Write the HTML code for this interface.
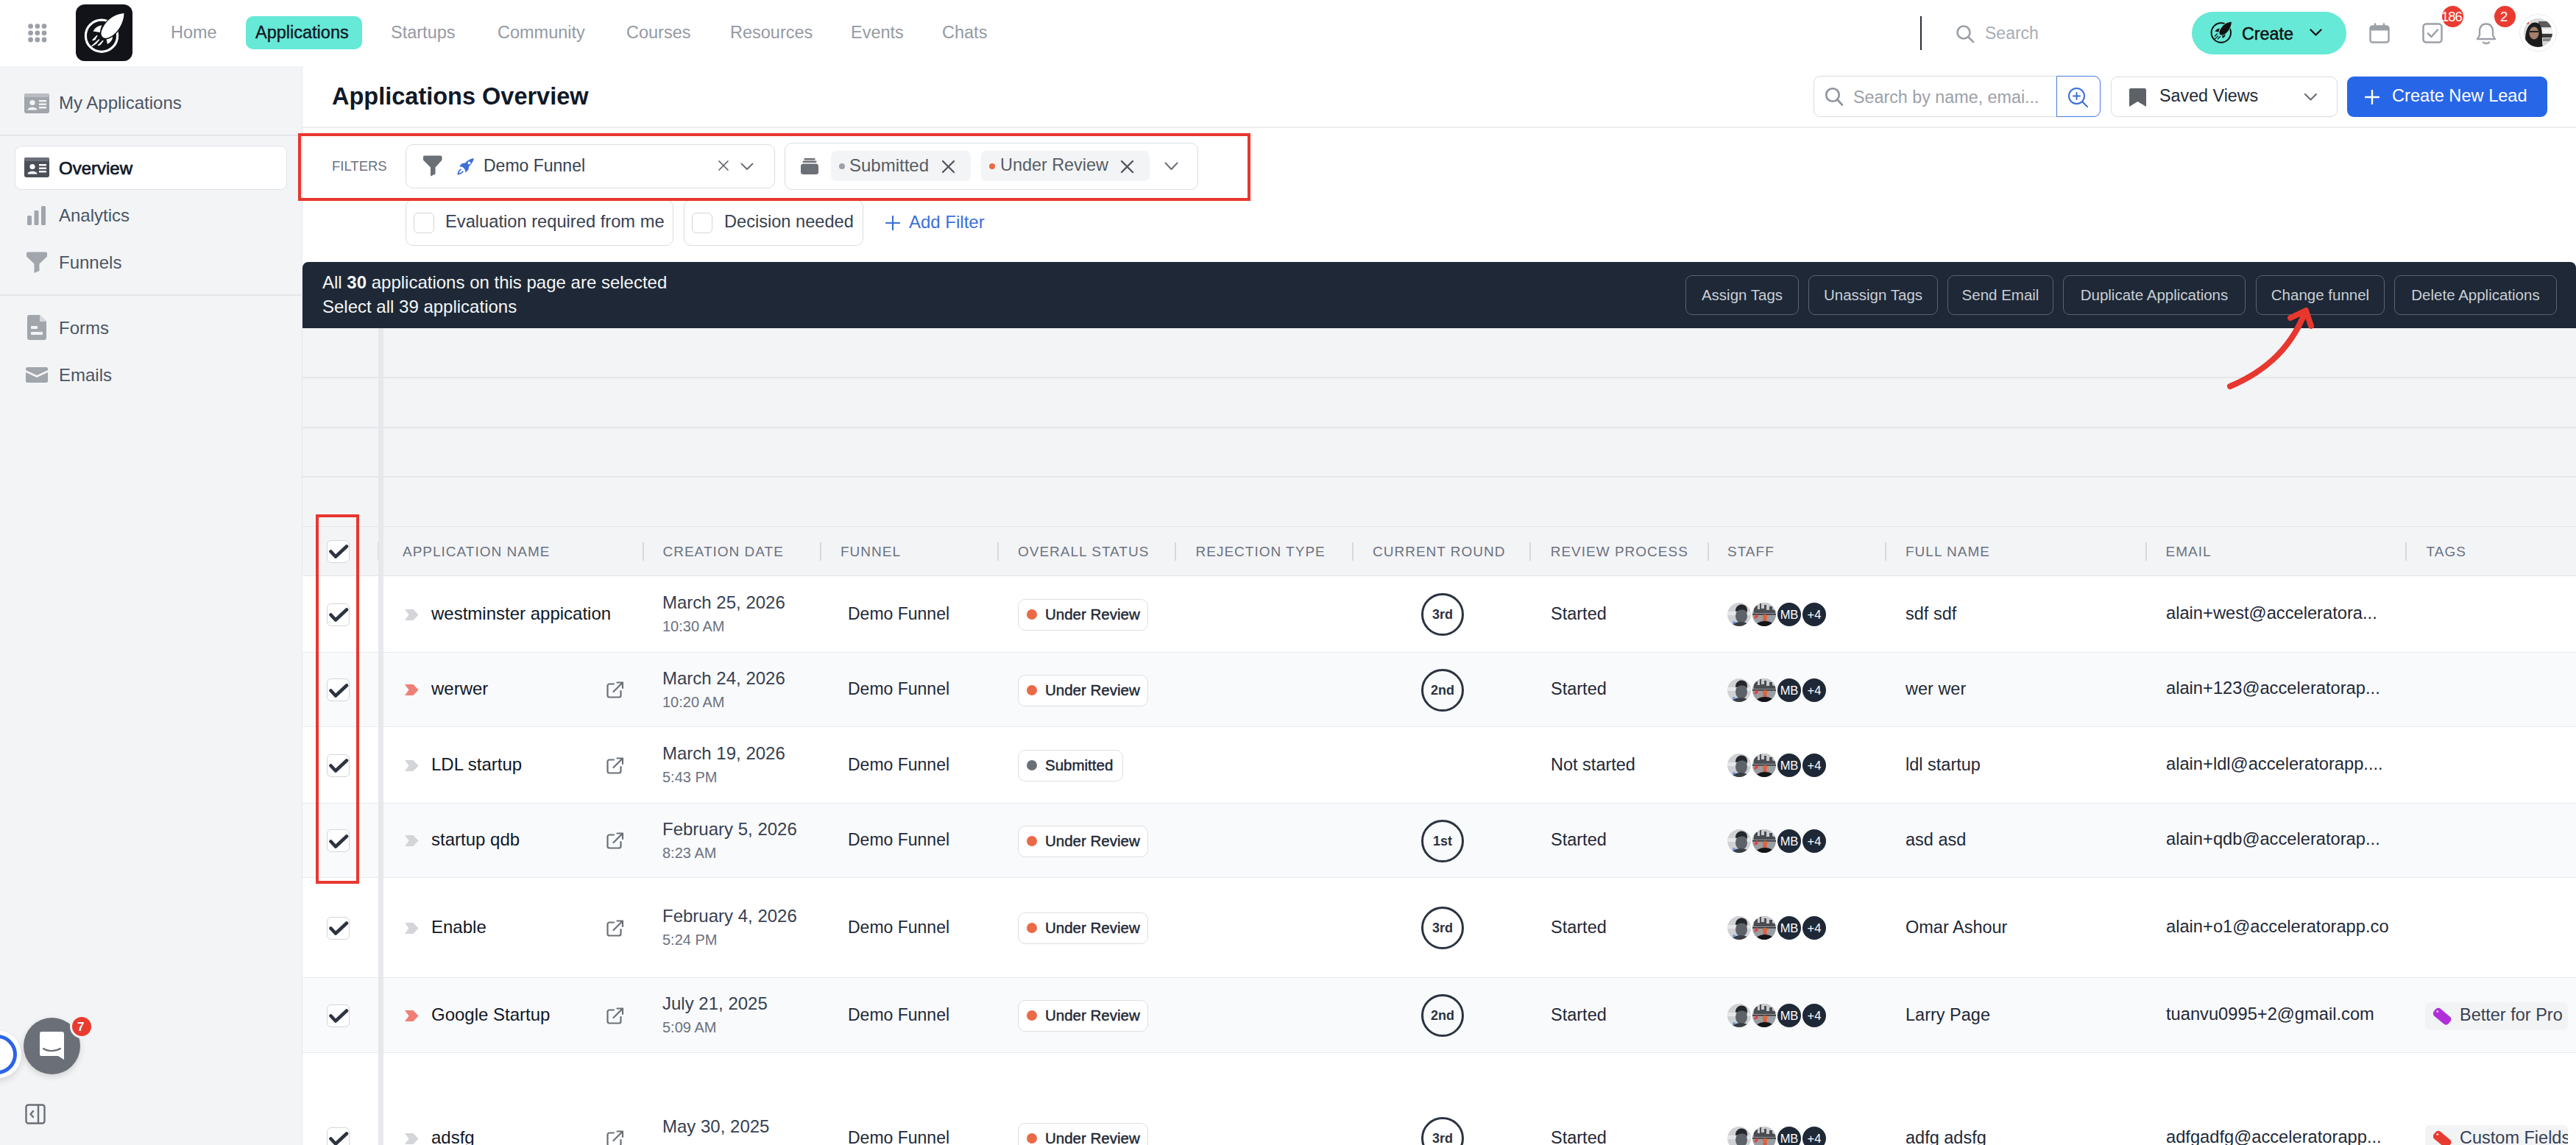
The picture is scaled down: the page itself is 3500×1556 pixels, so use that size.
<!DOCTYPE html>
<html><head><meta charset="utf-8">
<style>
*{box-sizing:border-box;margin:0;padding:0}
html,body{width:3500px;height:1556px;overflow:hidden;background:#fff;font-family:"Liberation Sans",sans-serif;color:#111827}
.a{position:absolute}
.t{position:absolute;white-space:nowrap;line-height:1}
svg{display:block}
/* nav */
.nav{font-size:23.5px;color:#959aa3}
/* sidebar */
#side{position:absolute;left:0;top:90px;width:411px;height:1466px;background:#f3f4f6;border-right:1px solid #e5e7eb}
.si{position:absolute;left:80px;font-size:24px;color:#4b5563;line-height:1}
.hdr{font-size:19px;letter-spacing:1px;color:#6b7280}
.sep{position:absolute;width:2px;height:25px;top:737px;background:#d6d9de}
.row{position:absolute;left:411px;width:3089px}
.cb{position:absolute;width:31px;height:31px;border:1.5px solid #d1d5db;border-radius:6px;background:#fff}
.pill{position:absolute;height:43px;border:1.5px solid #dcdfe4;border-radius:10px;background:#fff;font-size:20.5px;color:#1f2937;-webkit-text-stroke:0.45px #1f2937}
.dot{position:absolute;width:14px;height:14px;border-radius:50%;left:11px;top:13px;background:#ea6a47}
.rc{position:absolute;width:58px;height:58px;border:3px solid #2b3340;border-radius:50%;font-size:18px;font-weight:700;color:#2b3340;text-align:center;line-height:52px}
.av{position:absolute;width:33px;height:33px;border-radius:50%}
.btn{position:absolute;top:374px;height:54px;border:1.5px solid #5b6370;border-radius:9px;color:#c9ced6;font-size:20.5px;line-height:51px;text-align:center}
</style></head><body>

<!-- ============ TOP NAV ============ -->
<div class="a" style="left:0;top:0;width:3500px;height:90px;background:#fff"></div>
<svg class="a" style="left:38px;top:32px" width="27" height="27" viewBox="0 0 27 27">
 <g fill="#9ca0a8"><circle cx="3.6" cy="3.6" r="3.4"/><circle cx="12.8" cy="3.6" r="3.4"/><circle cx="22" cy="3.6" r="3.4"/>
 <circle cx="3.6" cy="12.8" r="3.4"/><circle cx="12.8" cy="12.8" r="3.4"/><circle cx="22" cy="12.8" r="3.4"/>
 <circle cx="3.6" cy="22" r="3.4"/><circle cx="12.8" cy="22" r="3.4"/><circle cx="22" cy="22" r="3.4"/></g></svg>
<div class="a" style="left:103px;top:6px;width:77px;height:77px;border-radius:12px;background:#111318"></div>
<svg class="a" style="left:103px;top:6px" width="77" height="77" viewBox="0 0 77 77">
 <circle cx="35" cy="42.7" r="21.6" fill="none" stroke="#fff" stroke-width="3.2"/>
 <path d="M65.5 12 C57 12.5 47 17.5 41.5 24.5 C37 30 34.5 35.5 34.5 40 C35 44.5 38.5 46.5 43 45.5 C49 44 55.5 38 59.5 31.5 C63.5 25 65.5 18 65.5 12 Z" fill="#fff" stroke="#111318" stroke-width="2.6" paint-order="stroke"/>
 <path d="M23.5 36.5 C26 32 30 29 35.5 28.5 C34 31.5 33 34.5 33 38 Z" fill="#fff"/>
 <path d="M41.5 47.5 C44.5 47 47.5 45.5 50 44 C50 48 47.5 51.5 43 54 Z" fill="#fff"/>
 <path d="M23 48.5 L28.8 42.5 L26 47.5Z M22 56.5 L31.5 48 L27 53.5Z M30.5 55.5 L36.8 49.5 L33.5 54Z" fill="#fff" stroke="#fff" stroke-width="1.4" stroke-linejoin="round"/>
 <path d="M36.5 41 C38 35 41 29 46 24" fill="none" stroke="#111318" stroke-width="0"/>
</svg>
<div class="t nav" style="left:232px;top:33px">Home</div>
<div class="a" style="left:334px;top:22px;width:158px;height:45px;border-radius:10px;background:#66e9d6"></div>
<div class="t nav" style="left:347px;top:33px;color:#111827;-webkit-text-stroke:0.4px #111827">Applications</div>
<div class="t nav" style="left:531px;top:33px">Startups</div>
<div class="t nav" style="left:676px;top:33px">Community</div>
<div class="t nav" style="left:851px;top:33px">Courses</div>
<div class="t nav" style="left:992px;top:33px">Resources</div>
<div class="t nav" style="left:1156px;top:33px">Events</div>
<div class="t nav" style="left:1280px;top:33px">Chats</div>

<div class="a" style="left:2609px;top:22px;width:2px;height:46px;background:#2b2f36"></div>
<svg class="a" style="left:2657px;top:33px" width="27" height="27" viewBox="0 0 27 27"><circle cx="11" cy="11" r="8.5" fill="none" stroke="#9ca0a8" stroke-width="2.6"/><path d="M17.5 17.5 L24 24" stroke="#9ca0a8" stroke-width="2.6" stroke-linecap="round"/></svg>
<div class="t nav" style="left:2697px;top:34px;font-size:23px;color:#a9adb4">Search</div>

<div class="a" style="left:2978px;top:16px;width:210px;height:58px;border-radius:29px;background:#66e9d6"></div>
<svg class="a" style="left:3002px;top:28px" width="34" height="34" viewBox="0 0 34 34">
 <circle cx="15.8" cy="16.5" r="13.2" fill="none" stroke="#111" stroke-width="2"/>
 <g transform="translate(-4.9 -4.56) scale(0.53)">
 <path d="M65.5 12 C57 12.5 47 17.5 41.5 24.5 C37 30 34.5 35.5 34.5 40 C35 44.5 38.5 46.5 43 45.5 C49 44 55.5 38 59.5 31.5 C63.5 25 65.5 18 65.5 12 Z" fill="#111" stroke="#66e9d6" stroke-width="3.5" paint-order="stroke"/>
 <path d="M23.5 36.5 C26 32 30 29 35.5 28.5 C34 31.5 33 34.5 33 38 Z" fill="#111"/>
 <path d="M41.5 47.5 C44.5 47 47.5 45.5 50 44 C50 48 47.5 51.5 43 54 Z" fill="#111"/>
 <path d="M23 48.5 L28.8 42.5 M22 56.5 L31.5 48 M30.5 55.5 L36.8 49.5" stroke="#111" stroke-width="2.4" stroke-linecap="round"/>
 </g>
</svg>
<div class="t" style="left:3046px;top:35px;font-size:23.3px;color:#111;-webkit-text-stroke:0.5px #111">Create</div>
<svg class="a" style="left:3137px;top:38px" width="19" height="13" viewBox="0 0 19 13"><path d="M2.5 2.5 L9.5 9.5 L16.5 2.5" fill="none" stroke="#111" stroke-width="2.3" stroke-linecap="round" stroke-linejoin="round"/></svg>

<svg class="a" style="left:3219px;top:31px" width="28" height="28" viewBox="0 0 28 28"><rect x="1.5" y="4.5" width="25" height="22" rx="3" fill="none" stroke="#9ca0a8" stroke-width="2.4"/><rect x="1.5" y="4.5" width="25" height="6" rx="2" fill="#9ca0a8"/><path d="M8 1.5 V6 M20 1.5 V6" stroke="#9ca0a8" stroke-width="2.4" stroke-linecap="round"/></svg>
<svg class="a" style="left:3291px;top:31px" width="29" height="29" viewBox="0 0 29 29"><rect x="1.5" y="1.5" width="25" height="25" rx="4" fill="none" stroke="#9ca0a8" stroke-width="2.5"/><path d="M8 14.5 L12.5 19 L21 9.5" fill="none" stroke="#9ca0a8" stroke-width="2.5" stroke-linecap="round" stroke-linejoin="round"/></svg>
<div class="a" style="left:3318px;top:8px;width:29px;height:29px;border-radius:50%;background:#ea3b30;overflow:hidden"><div class="t" style="left:-1px;top:6px;font-size:18.5px;color:#fff;letter-spacing:-1px">186</div></div>
<svg class="a" style="left:3363px;top:30px" width="30" height="31" viewBox="0 0 30 31"><path d="M15 2.5 C9 2.5 6 7 6 12 V18 L3 23 H27 L24 18 V12 C24 7 21 2.5 15 2.5Z" fill="none" stroke="#9ca0a8" stroke-width="2.4" stroke-linejoin="round"/><path d="M11 27.5 C12.5 29.5 17.5 29.5 19 27.5" fill="none" stroke="#9ca0a8" stroke-width="2.4" stroke-linecap="round"/></svg>
<div class="a" style="left:3389px;top:8px;width:29px;height:29px;border-radius:50%;background:#ea3b30"><div class="t" style="left:8px;top:6px;font-size:18.5px;color:#fff">2</div></div>
<div class="a" style="left:3423px;top:19px;width:51px;height:51px;border-radius:50%;background:#fff;border:1.5px solid #e8eaee"></div>
<svg class="a" style="left:3429px;top:25px" width="39" height="39" viewBox="0 0 39 39"><defs><clipPath id="avc"><circle cx="19.5" cy="19.5" r="19.5"/></clipPath></defs><g clip-path="url(#avc)"><rect width="39" height="39" fill="#d9d9d9"/><rect x="20" y="4" width="19" height="8" fill="#5a5a5a"/><rect x="24" y="14" width="15" height="6" fill="#f2f2f2"/><rect x="22" y="21" width="17" height="5" fill="#3a3a3a"/><rect x="26" y="27" width="13" height="4" fill="#888"/><path d="M3 39 C1 28 2 14 9 8 C15 3 23 6 24 14 C26 22 24 32 26 39Z" fill="#1c1c1c"/><ellipse cx="14" cy="20" rx="6.5" ry="8.5" fill="#a57e6c"/><path d="M8 18 H20" stroke="#222" stroke-width="2"/><circle cx="5" cy="6" r="2" fill="#d03a3a"/></g></svg>

<!-- ============ SIDEBAR ============ -->
<div id="side"></div>
<div class="a" style="left:0;top:183px;width:410px;height:2px;background:#e3e5e9"></div>
<div class="a" style="left:0;top:400px;width:410px;height:2px;background:#e3e5e9"></div>
<div class="a" style="left:20px;top:198px;width:370px;height:60px;border-radius:9px;background:#fff;border:1.5px solid #dfe2e6"></div>
<svg class="a" style="left:33px;top:127px" width="34" height="27" viewBox="0 0 34 27"><rect x="0" y="0" width="34" height="27" rx="3" fill="#a1a5ac"/><rect x="0" y="0" width="34" height="5" rx="2" fill="#b9bcc2"/><circle cx="11" cy="12.5" r="3.6" fill="#f3f4f6"/><path d="M4.5 22.5 C5 17.5 17 17.5 17.5 22.5Z" fill="#f3f4f6"/><rect x="20" y="9" width="10" height="2.4" fill="#f3f4f6"/><rect x="20" y="13.5" width="10" height="2.4" fill="#f3f4f6"/><rect x="20" y="18" width="10" height="2.4" fill="#f3f4f6"/></svg>
<div class="si" style="top:128px">My Applications</div>
<svg class="a" style="left:33px;top:214px" width="34" height="27" viewBox="0 0 34 27"><rect x="0" y="0" width="34" height="27" rx="3" fill="#4b5058"/><rect x="0" y="0" width="34" height="5" rx="2" fill="#6b7078"/><circle cx="11" cy="12.5" r="3.6" fill="#fff"/><path d="M4.5 22.5 C5 17.5 17 17.5 17.5 22.5Z" fill="#fff"/><rect x="20" y="9" width="10" height="2.4" fill="#fff"/><rect x="20" y="13.5" width="10" height="2.4" fill="#fff"/><rect x="20" y="18" width="10" height="2.4" fill="#fff"/></svg>
<div class="si" style="top:216.5px;font-size:24px;color:#111827;-webkit-text-stroke:0.7px #111827">Overview</div>
<svg class="a" style="left:37px;top:280px" width="26" height="26" viewBox="0 0 26 26"><g fill="#a1a5ac"><rect x="0" y="13" width="6" height="13" rx="1.5"/><rect x="9.5" y="6" width="6" height="20" rx="1.5"/><rect x="19" y="0" width="6" height="26" rx="1.5"/></g></svg>
<div class="si" style="top:281px">Analytics</div>
<svg class="a" style="left:36px;top:342px" width="28" height="30" viewBox="0 0 28 30"><path d="M0 2 Q0 0.5 2 0.5 H26 Q28 0.5 28 2 V6.5 L17.5 16.5 V26 L10.5 29 V16.5 L0 6.5Z" fill="#a1a5ac"/></svg>
<div class="si" style="top:345px">Funnels</div>
<svg class="a" style="left:37px;top:428px" width="26" height="34" viewBox="0 0 26 34"><path d="M3 0 H17 L26 9 V31 C26 32.7 24.7 34 23 34 H3 C1.3 34 0 32.7 0 31 V3 C0 1.3 1.3 0 3 0Z" fill="#a1a5ac"/><path d="M17 0 V9 H26Z" fill="#d5d7db"/><rect x="5" y="15" width="9" height="4" rx="1" fill="#f3f4f6"/><rect x="5" y="23" width="16" height="4" rx="1" fill="#f3f4f6"/></svg>
<div class="si" style="top:434px">Forms</div>
<svg class="a" style="left:35px;top:499px" width="30" height="21" viewBox="0 0 30 21"><path d="M0 2 C0 1 1 0 2 0 H28 C29 0 30 1 30 2 V4 L15 11 L0 4Z" fill="#a1a5ac"/><path d="M0 7 L15 14 L30 7 V19 C30 20 29 21 28 21 H2 C1 21 0 20 0 19Z" fill="#a1a5ac"/></svg>
<div class="si" style="top:498px">Emails</div>
<!-- chat bubble -->
<div class="a" style="left:-33px;top:1401px;width:62px;height:64px;border-radius:50%;background:#fff;box-shadow:0 4px 10px rgba(0,0,0,.12)"></div>
<div class="a" style="left:-31px;top:1406px;width:54px;height:54px;border-radius:50%;border:5.5px solid #2c63e8"></div>
<div class="a" style="left:32px;top:1383px;width:77px;height:77px;border-radius:50%;background:#6b6f77;box-shadow:0 3px 8px rgba(0,0,0,.15)"></div>
<svg class="a" style="left:53px;top:1401px" width="36" height="40" viewBox="0 0 36 40"><path d="M3 1 H31 C33 1 34 2 34 4 V39 L26 34 H3 C1.5 34 1 33 1 31.5 V4 C1 2 2 1 3 1Z" fill="#fff"/><path d="M6 24 C12 28 22 28 29 24" fill="none" stroke="#6b6f77" stroke-width="2.2" stroke-linecap="round"/></svg>
<div class="a" style="left:95px;top:1379px;width:32px;height:32px;border-radius:50%;background:#ea3b30;border:3px solid #f3f4f6"><div class="t" style="left:7px;top:5px;font-size:17px;color:#fff;font-weight:700">7</div></div>
<svg class="a" style="left:34px;top:1500px" width="28" height="28" viewBox="0 0 28 28"><rect x="1.5" y="1.5" width="25" height="25" rx="3" fill="none" stroke="#6b6f77" stroke-width="2.4"/><path d="M18 1.5 V26.5" stroke="#6b6f77" stroke-width="2.4"/><path d="M11 10 L7.5 14 L11 18" fill="none" stroke="#6b6f77" stroke-width="2.4" stroke-linecap="round" stroke-linejoin="round"/></svg>

<!-- ============ MAIN HEADER ============ -->
<div class="t" style="left:451px;top:115px;font-size:32.5px;font-weight:700;color:#111827">Applications Overview</div>
<div class="a" style="left:411px;top:172px;width:3089px;height:2px;background:#eceef1"></div>
<div class="a" style="left:2464px;top:103px;width:390px;height:56px;border:1.5px solid #d9dce1;border-radius:9px;background:#fff"></div>
<div class="a" style="left:2794px;top:103px;width:60px;height:56px;border:1.5px solid #4c7bdc;border-radius:0 9px 9px 0"></div>
<svg class="a" style="left:2479px;top:118px" width="26" height="27" viewBox="0 0 26 27"><circle cx="11" cy="11" r="8.8" fill="none" stroke="#8e939b" stroke-width="2.6"/><path d="M17.5 17.5 L24 24.5" stroke="#8e939b" stroke-width="2.6" stroke-linecap="round"/></svg>
<div class="t" style="left:2518px;top:120.5px;font-size:23.3px;color:#9ca1a9">Search by name, emai...</div>
<svg class="a" style="left:2809px;top:118px" width="30" height="29" viewBox="0 0 30 29"><circle cx="12.5" cy="12.5" r="10.5" fill="none" stroke="#3c6fd8" stroke-width="2"/><path d="M12.5 8 V17 M8 12.5 H17" stroke="#3c6fd8" stroke-width="2" stroke-linecap="round"/><path d="M20.5 20.5 L27 27" stroke="#3c6fd8" stroke-width="2" stroke-linecap="round"/></svg>
<div class="a" style="left:2868px;top:104px;width:308px;height:55px;border:1.5px solid #d9dce1;border-radius:9px;background:#fff"></div>
<svg class="a" style="left:2893px;top:120px" width="23" height="25" viewBox="0 0 23 25"><path d="M2 0 H21 C22 0 23 1 23 2 V25 L11.5 18 L0 25 V2 C0 1 1 0 2 0Z" fill="#5d6168"/></svg>
<div class="t" style="left:2934px;top:119px;font-size:23.3px;color:#1f2937">Saved Views</div>
<svg class="a" style="left:3130px;top:126px" width="19" height="12" viewBox="0 0 19 12"><path d="M2 2 L9.5 9.5 L17 2" fill="none" stroke="#6b7078" stroke-width="2.2" stroke-linecap="round" stroke-linejoin="round"/></svg>
<div class="a" style="left:3189px;top:104px;width:272px;height:55px;border-radius:9px;background:#2866e8"></div>
<svg class="a" style="left:3213px;top:122px" width="20" height="20" viewBox="0 0 20 20"><path d="M10 1 V19 M1 10 H19" stroke="#fff" stroke-width="2.4" stroke-linecap="round"/></svg>
<div class="t" style="left:3250px;top:119px;font-size:23.6px;color:#fff">Create New Lead</div>

<div class="a" style="left:551px;top:271px;width:364px;height:63px;border:1.5px solid #d9dce1;border-radius:10px;background:#fff"></div>
<div class="cb" style="left:562px;top:289px;width:28px;height:28px"></div>
<div class="t" style="left:605px;top:290px;font-size:23.7px;color:#374151">Evaluation required from me</div>
<div class="a" style="left:929px;top:271px;width:244px;height:63px;border:1.5px solid #d9dce1;border-radius:10px;background:#fff"></div>
<div class="cb" style="left:940px;top:289px;width:28px;height:28px"></div>
<div class="t" style="left:984px;top:290px;font-size:23.6px;color:#374151">Decision needed</div>
<svg class="a" style="left:1203px;top:293px" width="20" height="20" viewBox="0 0 20 20"><path d="M10 1 V19 M1 10 H19" stroke="#3c6fd8" stroke-width="2.2" stroke-linecap="round"/></svg>
<div class="t" style="left:1235px;top:290px;font-size:24px;color:#3c6fd8">Add Filter</div>

<div class="a" style="left:405px;top:181px;width:1294px;height:92px;border:4px solid #e8372f"></div>
<div class="t" style="left:451px;top:217px;font-size:18.5px;color:#6b7280">FILTERS</div>
<div class="a" style="left:551px;top:196px;width:502px;height:60px;border:1.5px solid #d9dce1;border-radius:10px;background:#fff"></div>
<svg class="a" style="left:575px;top:211px" width="26" height="30" viewBox="0 0 26 30"><path d="M0 2 Q0 0.5 2 0.5 H23.5 Q25.5 0.5 25.5 2 V6.5 L16.5 16.5 V25.5 L10 28.5 V16.5 L0 6.5Z" fill="#6b6f76"/></svg>
<svg class="a" style="left:620px;top:214px" width="25" height="24" viewBox="0 0 25 24"><path d="M24 1 C19 1.5 15 4 12 7.5 L8 8 L4 12 L8.5 13 L11.5 16 L12.5 20.5 L16.5 16.5 L17 12.5 C20.5 9.5 23 5.5 24 1Z" fill="#3c6fd8"/><circle cx="17.5" cy="7.5" r="2" fill="#fff"/><path d="M6.5 16 C4 17 3 19.5 2.5 22.5 C5.5 22 8 21 9 18.5" fill="none" stroke="#3c6fd8" stroke-width="1.8"/></svg>
<div class="t" style="left:657px;top:213.5px;font-size:23px;color:#374151">Demo Funnel</div>
<svg class="a" style="left:975px;top:217px" width="16" height="16" viewBox="0 0 16 16"><path d="M2 2 L14 14 M14 2 L2 14" stroke="#5f646b" stroke-width="1.7" stroke-linecap="round"/></svg>
<svg class="a" style="left:1006px;top:221px" width="18" height="11" viewBox="0 0 18 11"><path d="M1.5 1.5 L9 9 L16.5 1.5" fill="none" stroke="#6b7078" stroke-width="2" stroke-linecap="round" stroke-linejoin="round"/></svg>
<div class="a" style="left:1066px;top:194px;width:562px;height:64px;border:1.5px solid #d9dce1;border-radius:10px;background:#fff"></div>
<svg class="a" style="left:1087px;top:213px" width="26" height="25" viewBox="0 0 26 25"><rect x="1" y="9.5" width="24" height="14.5" rx="3.5" fill="#6b6f76"/><rect x="3.5" y="5.5" width="19" height="2.5" rx="1.2" fill="#6b6f76"/><rect x="5.5" y="2" width="15" height="2.5" rx="1.2" fill="#6b6f76"/></svg>
<div class="a" style="left:1129px;top:205px;width:190px;height:41px;border-radius:7px;background:#f3f4f6"></div>
<div class="a" style="left:1140px;top:222px;width:8px;height:8px;border-radius:50%;background:#9ca0a8"></div>
<div class="t" style="left:1154px;top:212.7px;font-size:24px;color:#575c64">Submitted</div>
<svg class="a" style="left:1279px;top:217px" width="19" height="19" viewBox="0 0 19 19"><path d="M2 2 L17 17 M17 2 L2 17" stroke="#50555d" stroke-width="2.3" stroke-linecap="round"/></svg>
<div class="a" style="left:1333px;top:205px;width:229px;height:41px;border-radius:7px;background:#f3f4f6"></div>
<div class="a" style="left:1344px;top:222px;width:8px;height:8px;border-radius:50%;background:#ea6a47"></div>
<div class="t" style="left:1359px;top:213px;font-size:23.4px;color:#575c64">Under Review</div>
<svg class="a" style="left:1522px;top:217px" width="19" height="19" viewBox="0 0 19 19"><path d="M2 2 L17 17 M17 2 L2 17" stroke="#50555d" stroke-width="2.3" stroke-linecap="round"/></svg>
<svg class="a" style="left:1582px;top:220px" width="19" height="12" viewBox="0 0 19 12"><path d="M1.5 1.5 L9.5 10 L17.5 1.5" fill="none" stroke="#6b7078" stroke-width="2" stroke-linecap="round" stroke-linejoin="round"/></svg>

<div class="a" style="left:411px;top:356px;width:3089px;height:90px;border-radius:8px 8px 0 0;background:#1e2836"></div>
<div class="t" style="left:438px;top:372px;font-size:24px;color:#f5f6f8">All <b>30</b> applications on this page are selected</div>
<div class="t" style="left:438px;top:404.5px;font-size:24px;color:#f5f6f8">Select all 39 applications</div>
<div class="btn" style="left:2290px;width:154px">Assign Tags</div>
<div class="btn" style="left:2457px;width:176px">Unassign Tags</div>
<div class="btn" style="left:2646px;width:144px">Send Email</div>
<div class="btn" style="left:2803px;width:248px">Duplicate Applications</div>
<div class="btn" style="left:3065px;width:175px">Change funnel</div>
<div class="btn" style="left:3253px;width:221px">Delete Applications</div>

<!-- TABLE -->
<div class="a" style="left:411px;top:446px;width:3089px;height:337px;background:#f3f4f6"></div>
<div class="a" style="left:411px;top:512px;width:3089px;height:2px;background:#e4e6ea"></div>
<div class="a" style="left:411px;top:580px;width:3089px;height:2px;background:#e4e6ea"></div>
<div class="a" style="left:411px;top:647px;width:3089px;height:2px;background:#e4e6ea"></div>
<div class="a" style="left:411px;top:715px;width:3089px;height:2px;background:#e4e6ea"></div>
<div class="a" style="left:411px;top:782px;width:3089px;height:2px;background:#e4e6ea"></div>
<div class="a" style="left:411px;top:783px;width:3089px;height:104px;background:#fff"></div>
<div class="a" style="left:411px;top:886px;width:3089px;height:2px;background:#e8eaed"></div>
<div class="cb" style="left:444px;top:819.5px"></div>
<svg class="a" style="left:446px;top:826.0px" width="28" height="20" viewBox="0 0 28 20"><path d="M3.5 9.5 L10 16.5 L25 2.5" fill="none" stroke="#2d3440" stroke-width="4.6" stroke-linecap="round" stroke-linejoin="round"/></svg>
<svg class="a" style="left:550px;top:827.5px" width="19" height="15" viewBox="0 0 19 15"><path d="M0 0 H11.5 L18.5 7.5 L11.5 15 H0 L5.5 7.5Z" fill="#d3d5d9"/></svg>
<div class="t" style="left:586px;top:821.9px;font-size:24px;color:#111827">westminster appication</div>
<div class="t" style="left:900px;top:807.3px;font-size:24px;color:#374151">March 25, 2026</div>
<div class="t" style="left:900px;top:841.1px;font-size:20px;color:#6b7280">10:30 AM</div>
<div class="t" style="left:1152px;top:822.7px;font-size:23px;color:#1f2937">Demo Funnel</div>
<div class="pill" style="left:1383px;top:814.0px;width:177px"><div class="dot"></div><div class="t" style="left:36px;top:10px">Under Review</div></div>
<div class="rc" style="left:1931px;top:806.0px">3rd</div>
<div class="t" style="left:2107px;top:822.7px;font-size:23.5px;color:#1f2937">Started</div>
<svg class="a" style="left:2347px;top:819.0px" width="32" height="32" viewBox="0 0 32 32"><defs><clipPath id="ca0"><circle cx="16" cy="16" r="16"/></clipPath></defs><g clip-path="url(#ca0)"><rect width="32" height="32" fill="#cfd1d4"/><rect x="0" y="12" width="32" height="5" fill="#e6e7e9"/><ellipse cx="19" cy="18" rx="8" ry="10" fill="#5d6268"/><path d="M11 12 C11 5 15 2.5 20 2.5 C26 3 28 8 26.5 14 C25 10 22 9 19 9.5 C15 10 13 12 11 12Z" fill="#24272b"/><ellipse cx="18" cy="35" rx="15" ry="9" fill="#3a3e44"/><circle cx="9" cy="27" r="2" fill="#4d7fe0" opacity=".7"/></g></svg>
<svg class="a" style="left:2381px;top:819.0px" width="32" height="32" viewBox="0 0 32 32"><defs><clipPath id="cb0"><circle cx="16" cy="16" r="16"/></clipPath></defs><g clip-path="url(#cb0)"><rect width="32" height="32" fill="#9a9ea3"/><rect width="32" height="10" fill="#c9cbce"/><path d="M2 14 V7 L4 6 V4 L7 4 V9 L10 9 V1 L12 1 V8 L16 8 V3 L19 3 V10 L23 10 V5 L27 5 V9 L31 11 V14Z" fill="#4a4d52"/><rect x="0" y="15" width="32" height="1.5" fill="#2a2c30"/><path d="M2 20 L6 15 L8 19 L4 22Z" fill="#e0453a"/><circle cx="17" cy="19" r="3.2" fill="#e0653d"/><rect x="14.5" y="22" width="5" height="5" fill="#d85a3a"/><ellipse cx="17" cy="33" rx="13" ry="8" fill="#131518"/></g></svg>
<div class="av" style="left:2415px;top:819.0px;width:32px;height:32px;background:#1e2836;color:#fff;font-size:16.5px;text-align:center;line-height:32px">MB</div>
<div class="av" style="left:2449px;top:819.0px;width:32px;height:32px;background:#1e2836;color:#fff;font-size:16.5px;text-align:center;line-height:32px">+4</div>
<div class="t" style="left:2589px;top:822.7px;font-size:23.5px;color:#1f2937">sdf sdf</div>
<div class="t" style="left:2943px;top:821.9px;font-size:23.7px;color:#1f2937">alain+west@acceleratora...</div>
<div class="a" style="left:411px;top:887px;width:3089px;height:101px;background:#f9fafb"></div>
<div class="a" style="left:411px;top:987px;width:3089px;height:2px;background:#e8eaed"></div>
<div class="cb" style="left:444px;top:922.0px"></div>
<svg class="a" style="left:446px;top:928.5px" width="28" height="20" viewBox="0 0 28 20"><path d="M3.5 9.5 L10 16.5 L25 2.5" fill="none" stroke="#2d3440" stroke-width="4.6" stroke-linecap="round" stroke-linejoin="round"/></svg>
<svg class="a" style="left:550px;top:930.0px" width="19" height="15" viewBox="0 0 19 15"><path d="M0 0 H11.5 L18.5 7.5 L11.5 15 H0 L5.5 7.5Z" fill="#ef7f76"/></svg>
<div class="t" style="left:586px;top:924.4px;font-size:24px;color:#111827">werwer</div>
<svg class="a" style="left:824px;top:926.0px" width="24" height="23" viewBox="0 0 24 23"><path d="M10 3.5 H4 C2.6 3.5 1.5 4.6 1.5 6 V19 C1.5 20.4 2.6 21.5 4 21.5 H17 C18.4 21.5 19.5 20.4 19.5 19 V13" fill="none" stroke="#6b7078" stroke-width="2.2" stroke-linecap="round"/><path d="M9.5 14 L22 1.5 M14.5 1.5 H22 V9" fill="none" stroke="#6b7078" stroke-width="2.2" stroke-linecap="round" stroke-linejoin="round"/></svg>
<div class="t" style="left:900px;top:909.8px;font-size:24px;color:#374151">March 24, 2026</div>
<div class="t" style="left:900px;top:943.6px;font-size:20px;color:#6b7280">10:20 AM</div>
<div class="t" style="left:1152px;top:925.2px;font-size:23px;color:#1f2937">Demo Funnel</div>
<div class="pill" style="left:1383px;top:916.5px;width:177px"><div class="dot"></div><div class="t" style="left:36px;top:10px">Under Review</div></div>
<div class="rc" style="left:1931px;top:908.5px">2nd</div>
<div class="t" style="left:2107px;top:925.2px;font-size:23.5px;color:#1f2937">Started</div>
<svg class="a" style="left:2347px;top:921.5px" width="32" height="32" viewBox="0 0 32 32"><defs><clipPath id="ca1"><circle cx="16" cy="16" r="16"/></clipPath></defs><g clip-path="url(#ca1)"><rect width="32" height="32" fill="#cfd1d4"/><rect x="0" y="12" width="32" height="5" fill="#e6e7e9"/><ellipse cx="19" cy="18" rx="8" ry="10" fill="#5d6268"/><path d="M11 12 C11 5 15 2.5 20 2.5 C26 3 28 8 26.5 14 C25 10 22 9 19 9.5 C15 10 13 12 11 12Z" fill="#24272b"/><ellipse cx="18" cy="35" rx="15" ry="9" fill="#3a3e44"/><circle cx="9" cy="27" r="2" fill="#4d7fe0" opacity=".7"/></g></svg>
<svg class="a" style="left:2381px;top:921.5px" width="32" height="32" viewBox="0 0 32 32"><defs><clipPath id="cb1"><circle cx="16" cy="16" r="16"/></clipPath></defs><g clip-path="url(#cb1)"><rect width="32" height="32" fill="#9a9ea3"/><rect width="32" height="10" fill="#c9cbce"/><path d="M2 14 V7 L4 6 V4 L7 4 V9 L10 9 V1 L12 1 V8 L16 8 V3 L19 3 V10 L23 10 V5 L27 5 V9 L31 11 V14Z" fill="#4a4d52"/><rect x="0" y="15" width="32" height="1.5" fill="#2a2c30"/><path d="M2 20 L6 15 L8 19 L4 22Z" fill="#e0453a"/><circle cx="17" cy="19" r="3.2" fill="#e0653d"/><rect x="14.5" y="22" width="5" height="5" fill="#d85a3a"/><ellipse cx="17" cy="33" rx="13" ry="8" fill="#131518"/></g></svg>
<div class="av" style="left:2415px;top:921.5px;width:32px;height:32px;background:#1e2836;color:#fff;font-size:16.5px;text-align:center;line-height:32px">MB</div>
<div class="av" style="left:2449px;top:921.5px;width:32px;height:32px;background:#1e2836;color:#fff;font-size:16.5px;text-align:center;line-height:32px">+4</div>
<div class="t" style="left:2589px;top:925.2px;font-size:23.5px;color:#1f2937">wer wer</div>
<div class="t" style="left:2943px;top:924.4px;font-size:23.7px;color:#1f2937">alain+123@acceleratorap...</div>
<div class="a" style="left:411px;top:988px;width:3089px;height:104px;background:#fff"></div>
<div class="a" style="left:411px;top:1091px;width:3089px;height:2px;background:#e8eaed"></div>
<div class="cb" style="left:444px;top:1024.5px"></div>
<svg class="a" style="left:446px;top:1031.0px" width="28" height="20" viewBox="0 0 28 20"><path d="M3.5 9.5 L10 16.5 L25 2.5" fill="none" stroke="#2d3440" stroke-width="4.6" stroke-linecap="round" stroke-linejoin="round"/></svg>
<svg class="a" style="left:550px;top:1032.5px" width="19" height="15" viewBox="0 0 19 15"><path d="M0 0 H11.5 L18.5 7.5 L11.5 15 H0 L5.5 7.5Z" fill="#d3d5d9"/></svg>
<div class="t" style="left:586px;top:1026.9px;font-size:24px;color:#111827">LDL startup</div>
<svg class="a" style="left:824px;top:1028.5px" width="24" height="23" viewBox="0 0 24 23"><path d="M10 3.5 H4 C2.6 3.5 1.5 4.6 1.5 6 V19 C1.5 20.4 2.6 21.5 4 21.5 H17 C18.4 21.5 19.5 20.4 19.5 19 V13" fill="none" stroke="#6b7078" stroke-width="2.2" stroke-linecap="round"/><path d="M9.5 14 L22 1.5 M14.5 1.5 H22 V9" fill="none" stroke="#6b7078" stroke-width="2.2" stroke-linecap="round" stroke-linejoin="round"/></svg>
<div class="t" style="left:900px;top:1012.3px;font-size:24px;color:#374151">March 19, 2026</div>
<div class="t" style="left:900px;top:1046.1px;font-size:20px;color:#6b7280">5:43 PM</div>
<div class="t" style="left:1152px;top:1027.7px;font-size:23px;color:#1f2937">Demo Funnel</div>
<div class="pill" style="left:1383px;top:1019.0px;width:143px"><div class="dot" style="background:#6b7078"></div><div class="t" style="left:36px;top:10px">Submitted</div></div>
<div class="t" style="left:2107px;top:1027.7px;font-size:23.5px;color:#1f2937">Not started</div>
<svg class="a" style="left:2347px;top:1024.0px" width="32" height="32" viewBox="0 0 32 32"><defs><clipPath id="ca2"><circle cx="16" cy="16" r="16"/></clipPath></defs><g clip-path="url(#ca2)"><rect width="32" height="32" fill="#cfd1d4"/><rect x="0" y="12" width="32" height="5" fill="#e6e7e9"/><ellipse cx="19" cy="18" rx="8" ry="10" fill="#5d6268"/><path d="M11 12 C11 5 15 2.5 20 2.5 C26 3 28 8 26.5 14 C25 10 22 9 19 9.5 C15 10 13 12 11 12Z" fill="#24272b"/><ellipse cx="18" cy="35" rx="15" ry="9" fill="#3a3e44"/><circle cx="9" cy="27" r="2" fill="#4d7fe0" opacity=".7"/></g></svg>
<svg class="a" style="left:2381px;top:1024.0px" width="32" height="32" viewBox="0 0 32 32"><defs><clipPath id="cb2"><circle cx="16" cy="16" r="16"/></clipPath></defs><g clip-path="url(#cb2)"><rect width="32" height="32" fill="#9a9ea3"/><rect width="32" height="10" fill="#c9cbce"/><path d="M2 14 V7 L4 6 V4 L7 4 V9 L10 9 V1 L12 1 V8 L16 8 V3 L19 3 V10 L23 10 V5 L27 5 V9 L31 11 V14Z" fill="#4a4d52"/><rect x="0" y="15" width="32" height="1.5" fill="#2a2c30"/><path d="M2 20 L6 15 L8 19 L4 22Z" fill="#e0453a"/><circle cx="17" cy="19" r="3.2" fill="#e0653d"/><rect x="14.5" y="22" width="5" height="5" fill="#d85a3a"/><ellipse cx="17" cy="33" rx="13" ry="8" fill="#131518"/></g></svg>
<div class="av" style="left:2415px;top:1024.0px;width:32px;height:32px;background:#1e2836;color:#fff;font-size:16.5px;text-align:center;line-height:32px">MB</div>
<div class="av" style="left:2449px;top:1024.0px;width:32px;height:32px;background:#1e2836;color:#fff;font-size:16.5px;text-align:center;line-height:32px">+4</div>
<div class="t" style="left:2589px;top:1027.7px;font-size:23.5px;color:#1f2937">ldl startup</div>
<div class="t" style="left:2943px;top:1026.9px;font-size:23.7px;color:#1f2937">alain+ldl@acceleratorapp....</div>
<div class="a" style="left:411px;top:1092px;width:3089px;height:101px;background:#f9fafb"></div>
<div class="a" style="left:411px;top:1192px;width:3089px;height:2px;background:#e8eaed"></div>
<div class="cb" style="left:444px;top:1127.0px"></div>
<svg class="a" style="left:446px;top:1133.5px" width="28" height="20" viewBox="0 0 28 20"><path d="M3.5 9.5 L10 16.5 L25 2.5" fill="none" stroke="#2d3440" stroke-width="4.6" stroke-linecap="round" stroke-linejoin="round"/></svg>
<svg class="a" style="left:550px;top:1135.0px" width="19" height="15" viewBox="0 0 19 15"><path d="M0 0 H11.5 L18.5 7.5 L11.5 15 H0 L5.5 7.5Z" fill="#d3d5d9"/></svg>
<div class="t" style="left:586px;top:1129.4px;font-size:24px;color:#111827">startup qdb</div>
<svg class="a" style="left:824px;top:1131.0px" width="24" height="23" viewBox="0 0 24 23"><path d="M10 3.5 H4 C2.6 3.5 1.5 4.6 1.5 6 V19 C1.5 20.4 2.6 21.5 4 21.5 H17 C18.4 21.5 19.5 20.4 19.5 19 V13" fill="none" stroke="#6b7078" stroke-width="2.2" stroke-linecap="round"/><path d="M9.5 14 L22 1.5 M14.5 1.5 H22 V9" fill="none" stroke="#6b7078" stroke-width="2.2" stroke-linecap="round" stroke-linejoin="round"/></svg>
<div class="t" style="left:900px;top:1114.8px;font-size:24px;color:#374151">February 5, 2026</div>
<div class="t" style="left:900px;top:1148.6px;font-size:20px;color:#6b7280">8:23 AM</div>
<div class="t" style="left:1152px;top:1130.2px;font-size:23px;color:#1f2937">Demo Funnel</div>
<div class="pill" style="left:1383px;top:1121.5px;width:177px"><div class="dot"></div><div class="t" style="left:36px;top:10px">Under Review</div></div>
<div class="rc" style="left:1931px;top:1113.5px">1st</div>
<div class="t" style="left:2107px;top:1130.2px;font-size:23.5px;color:#1f2937">Started</div>
<svg class="a" style="left:2347px;top:1126.5px" width="32" height="32" viewBox="0 0 32 32"><defs><clipPath id="ca3"><circle cx="16" cy="16" r="16"/></clipPath></defs><g clip-path="url(#ca3)"><rect width="32" height="32" fill="#cfd1d4"/><rect x="0" y="12" width="32" height="5" fill="#e6e7e9"/><ellipse cx="19" cy="18" rx="8" ry="10" fill="#5d6268"/><path d="M11 12 C11 5 15 2.5 20 2.5 C26 3 28 8 26.5 14 C25 10 22 9 19 9.5 C15 10 13 12 11 12Z" fill="#24272b"/><ellipse cx="18" cy="35" rx="15" ry="9" fill="#3a3e44"/><circle cx="9" cy="27" r="2" fill="#4d7fe0" opacity=".7"/></g></svg>
<svg class="a" style="left:2381px;top:1126.5px" width="32" height="32" viewBox="0 0 32 32"><defs><clipPath id="cb3"><circle cx="16" cy="16" r="16"/></clipPath></defs><g clip-path="url(#cb3)"><rect width="32" height="32" fill="#9a9ea3"/><rect width="32" height="10" fill="#c9cbce"/><path d="M2 14 V7 L4 6 V4 L7 4 V9 L10 9 V1 L12 1 V8 L16 8 V3 L19 3 V10 L23 10 V5 L27 5 V9 L31 11 V14Z" fill="#4a4d52"/><rect x="0" y="15" width="32" height="1.5" fill="#2a2c30"/><path d="M2 20 L6 15 L8 19 L4 22Z" fill="#e0453a"/><circle cx="17" cy="19" r="3.2" fill="#e0653d"/><rect x="14.5" y="22" width="5" height="5" fill="#d85a3a"/><ellipse cx="17" cy="33" rx="13" ry="8" fill="#131518"/></g></svg>
<div class="av" style="left:2415px;top:1126.5px;width:32px;height:32px;background:#1e2836;color:#fff;font-size:16.5px;text-align:center;line-height:32px">MB</div>
<div class="av" style="left:2449px;top:1126.5px;width:32px;height:32px;background:#1e2836;color:#fff;font-size:16.5px;text-align:center;line-height:32px">+4</div>
<div class="t" style="left:2589px;top:1130.2px;font-size:23.5px;color:#1f2937">asd asd</div>
<div class="t" style="left:2943px;top:1129.4px;font-size:23.7px;color:#1f2937">alain+qdb@acceleratorap...</div>
<div class="a" style="left:411px;top:1193px;width:3089px;height:136px;background:#fff"></div>
<div class="a" style="left:411px;top:1328px;width:3089px;height:2px;background:#e8eaed"></div>
<div class="cb" style="left:444px;top:1245.5px"></div>
<svg class="a" style="left:446px;top:1252.0px" width="28" height="20" viewBox="0 0 28 20"><path d="M3.5 9.5 L10 16.5 L25 2.5" fill="none" stroke="#2d3440" stroke-width="4.6" stroke-linecap="round" stroke-linejoin="round"/></svg>
<svg class="a" style="left:550px;top:1253.5px" width="19" height="15" viewBox="0 0 19 15"><path d="M0 0 H11.5 L18.5 7.5 L11.5 15 H0 L5.5 7.5Z" fill="#d3d5d9"/></svg>
<div class="t" style="left:586px;top:1247.9px;font-size:24px;color:#111827">Enable</div>
<svg class="a" style="left:824px;top:1249.5px" width="24" height="23" viewBox="0 0 24 23"><path d="M10 3.5 H4 C2.6 3.5 1.5 4.6 1.5 6 V19 C1.5 20.4 2.6 21.5 4 21.5 H17 C18.4 21.5 19.5 20.4 19.5 19 V13" fill="none" stroke="#6b7078" stroke-width="2.2" stroke-linecap="round"/><path d="M9.5 14 L22 1.5 M14.5 1.5 H22 V9" fill="none" stroke="#6b7078" stroke-width="2.2" stroke-linecap="round" stroke-linejoin="round"/></svg>
<div class="t" style="left:900px;top:1233.3px;font-size:24px;color:#374151">February 4, 2026</div>
<div class="t" style="left:900px;top:1267.1px;font-size:20px;color:#6b7280">5:24 PM</div>
<div class="t" style="left:1152px;top:1248.7px;font-size:23px;color:#1f2937">Demo Funnel</div>
<div class="pill" style="left:1383px;top:1240.0px;width:177px"><div class="dot"></div><div class="t" style="left:36px;top:10px">Under Review</div></div>
<div class="rc" style="left:1931px;top:1232.0px">3rd</div>
<div class="t" style="left:2107px;top:1248.7px;font-size:23.5px;color:#1f2937">Started</div>
<svg class="a" style="left:2347px;top:1245.0px" width="32" height="32" viewBox="0 0 32 32"><defs><clipPath id="ca4"><circle cx="16" cy="16" r="16"/></clipPath></defs><g clip-path="url(#ca4)"><rect width="32" height="32" fill="#cfd1d4"/><rect x="0" y="12" width="32" height="5" fill="#e6e7e9"/><ellipse cx="19" cy="18" rx="8" ry="10" fill="#5d6268"/><path d="M11 12 C11 5 15 2.5 20 2.5 C26 3 28 8 26.5 14 C25 10 22 9 19 9.5 C15 10 13 12 11 12Z" fill="#24272b"/><ellipse cx="18" cy="35" rx="15" ry="9" fill="#3a3e44"/><circle cx="9" cy="27" r="2" fill="#4d7fe0" opacity=".7"/></g></svg>
<svg class="a" style="left:2381px;top:1245.0px" width="32" height="32" viewBox="0 0 32 32"><defs><clipPath id="cb4"><circle cx="16" cy="16" r="16"/></clipPath></defs><g clip-path="url(#cb4)"><rect width="32" height="32" fill="#9a9ea3"/><rect width="32" height="10" fill="#c9cbce"/><path d="M2 14 V7 L4 6 V4 L7 4 V9 L10 9 V1 L12 1 V8 L16 8 V3 L19 3 V10 L23 10 V5 L27 5 V9 L31 11 V14Z" fill="#4a4d52"/><rect x="0" y="15" width="32" height="1.5" fill="#2a2c30"/><path d="M2 20 L6 15 L8 19 L4 22Z" fill="#e0453a"/><circle cx="17" cy="19" r="3.2" fill="#e0653d"/><rect x="14.5" y="22" width="5" height="5" fill="#d85a3a"/><ellipse cx="17" cy="33" rx="13" ry="8" fill="#131518"/></g></svg>
<div class="av" style="left:2415px;top:1245.0px;width:32px;height:32px;background:#1e2836;color:#fff;font-size:16.5px;text-align:center;line-height:32px">MB</div>
<div class="av" style="left:2449px;top:1245.0px;width:32px;height:32px;background:#1e2836;color:#fff;font-size:16.5px;text-align:center;line-height:32px">+4</div>
<div class="t" style="left:2589px;top:1248.7px;font-size:23.5px;color:#1f2937">Omar Ashour</div>
<div class="t" style="left:2943px;top:1247.9px;font-size:23.7px;color:#1f2937">alain+o1@acceleratorapp.co</div>
<div class="a" style="left:411px;top:1329px;width:3089px;height:102px;background:#f9fafb"></div>
<div class="a" style="left:411px;top:1430px;width:3089px;height:2px;background:#e8eaed"></div>
<div class="cb" style="left:444px;top:1364.5px"></div>
<svg class="a" style="left:446px;top:1371.0px" width="28" height="20" viewBox="0 0 28 20"><path d="M3.5 9.5 L10 16.5 L25 2.5" fill="none" stroke="#2d3440" stroke-width="4.6" stroke-linecap="round" stroke-linejoin="round"/></svg>
<svg class="a" style="left:550px;top:1372.5px" width="19" height="15" viewBox="0 0 19 15"><path d="M0 0 H11.5 L18.5 7.5 L11.5 15 H0 L5.5 7.5Z" fill="#ef7f76"/></svg>
<div class="t" style="left:586px;top:1366.9px;font-size:24px;color:#111827">Google Startup</div>
<svg class="a" style="left:824px;top:1368.5px" width="24" height="23" viewBox="0 0 24 23"><path d="M10 3.5 H4 C2.6 3.5 1.5 4.6 1.5 6 V19 C1.5 20.4 2.6 21.5 4 21.5 H17 C18.4 21.5 19.5 20.4 19.5 19 V13" fill="none" stroke="#6b7078" stroke-width="2.2" stroke-linecap="round"/><path d="M9.5 14 L22 1.5 M14.5 1.5 H22 V9" fill="none" stroke="#6b7078" stroke-width="2.2" stroke-linecap="round" stroke-linejoin="round"/></svg>
<div class="t" style="left:900px;top:1352.3px;font-size:24px;color:#374151">July 21, 2025</div>
<div class="t" style="left:900px;top:1386.1px;font-size:20px;color:#6b7280">5:09 AM</div>
<div class="t" style="left:1152px;top:1367.7px;font-size:23px;color:#1f2937">Demo Funnel</div>
<div class="pill" style="left:1383px;top:1359.0px;width:177px"><div class="dot"></div><div class="t" style="left:36px;top:10px">Under Review</div></div>
<div class="rc" style="left:1931px;top:1351.0px">2nd</div>
<div class="t" style="left:2107px;top:1367.7px;font-size:23.5px;color:#1f2937">Started</div>
<svg class="a" style="left:2347px;top:1364.0px" width="32" height="32" viewBox="0 0 32 32"><defs><clipPath id="ca5"><circle cx="16" cy="16" r="16"/></clipPath></defs><g clip-path="url(#ca5)"><rect width="32" height="32" fill="#cfd1d4"/><rect x="0" y="12" width="32" height="5" fill="#e6e7e9"/><ellipse cx="19" cy="18" rx="8" ry="10" fill="#5d6268"/><path d="M11 12 C11 5 15 2.5 20 2.5 C26 3 28 8 26.5 14 C25 10 22 9 19 9.5 C15 10 13 12 11 12Z" fill="#24272b"/><ellipse cx="18" cy="35" rx="15" ry="9" fill="#3a3e44"/><circle cx="9" cy="27" r="2" fill="#4d7fe0" opacity=".7"/></g></svg>
<svg class="a" style="left:2381px;top:1364.0px" width="32" height="32" viewBox="0 0 32 32"><defs><clipPath id="cb5"><circle cx="16" cy="16" r="16"/></clipPath></defs><g clip-path="url(#cb5)"><rect width="32" height="32" fill="#9a9ea3"/><rect width="32" height="10" fill="#c9cbce"/><path d="M2 14 V7 L4 6 V4 L7 4 V9 L10 9 V1 L12 1 V8 L16 8 V3 L19 3 V10 L23 10 V5 L27 5 V9 L31 11 V14Z" fill="#4a4d52"/><rect x="0" y="15" width="32" height="1.5" fill="#2a2c30"/><path d="M2 20 L6 15 L8 19 L4 22Z" fill="#e0453a"/><circle cx="17" cy="19" r="3.2" fill="#e0653d"/><rect x="14.5" y="22" width="5" height="5" fill="#d85a3a"/><ellipse cx="17" cy="33" rx="13" ry="8" fill="#131518"/></g></svg>
<div class="av" style="left:2415px;top:1364.0px;width:32px;height:32px;background:#1e2836;color:#fff;font-size:16.5px;text-align:center;line-height:32px">MB</div>
<div class="av" style="left:2449px;top:1364.0px;width:32px;height:32px;background:#1e2836;color:#fff;font-size:16.5px;text-align:center;line-height:32px">+4</div>
<div class="t" style="left:2589px;top:1367.7px;font-size:23.5px;color:#1f2937">Larry Page</div>
<div class="t" style="left:2943px;top:1366.9px;font-size:23.7px;color:#1f2937">tuanvu0995+2@gmail.com</div>
<div class="a" style="left:3295px;top:1361.5px;width:194px;height:38px;border-radius:6px;background:#f2f3f5;overflow:hidden"><svg class="a" style="left:11px;top:7px" width="25" height="25" viewBox="0 0 25 25"><rect x="-1" y="6" width="26" height="13" rx="4.5" fill="#b02fd9" transform="rotate(40 12.5 12.5)"/><circle cx="5.8" cy="5.5" r="1.5" fill="#fff" opacity=".75"/></svg><div class="t" style="left:47px;top:6px;font-size:23.5px;color:#374151">Better for Pro</div></div>
<div class="a" style="left:411px;top:1431px;width:3089px;height:232px;background:#fff"></div>
<div class="cb" style="left:444px;top:1531.5px"></div>
<svg class="a" style="left:446px;top:1538.0px" width="28" height="20" viewBox="0 0 28 20"><path d="M3.5 9.5 L10 16.5 L25 2.5" fill="none" stroke="#2d3440" stroke-width="4.6" stroke-linecap="round" stroke-linejoin="round"/></svg>
<svg class="a" style="left:550px;top:1539.5px" width="19" height="15" viewBox="0 0 19 15"><path d="M0 0 H11.5 L18.5 7.5 L11.5 15 H0 L5.5 7.5Z" fill="#d3d5d9"/></svg>
<div class="t" style="left:586px;top:1533.9px;font-size:24px;color:#111827">adsfg</div>
<svg class="a" style="left:824px;top:1535.5px" width="24" height="23" viewBox="0 0 24 23"><path d="M10 3.5 H4 C2.6 3.5 1.5 4.6 1.5 6 V19 C1.5 20.4 2.6 21.5 4 21.5 H17 C18.4 21.5 19.5 20.4 19.5 19 V13" fill="none" stroke="#6b7078" stroke-width="2.2" stroke-linecap="round"/><path d="M9.5 14 L22 1.5 M14.5 1.5 H22 V9" fill="none" stroke="#6b7078" stroke-width="2.2" stroke-linecap="round" stroke-linejoin="round"/></svg>
<div class="t" style="left:900px;top:1519.3px;font-size:24px;color:#374151">May 30, 2025</div>
<div class="t" style="left:900px;top:1553.1px;font-size:20px;color:#6b7280">10:11 AM</div>
<div class="t" style="left:1152px;top:1534.7px;font-size:23px;color:#1f2937">Demo Funnel</div>
<div class="pill" style="left:1383px;top:1526.0px;width:177px"><div class="dot"></div><div class="t" style="left:36px;top:10px">Under Review</div></div>
<div class="rc" style="left:1931px;top:1518.0px">3rd</div>
<div class="t" style="left:2107px;top:1534.7px;font-size:23.5px;color:#1f2937">Started</div>
<svg class="a" style="left:2347px;top:1531.0px" width="32" height="32" viewBox="0 0 32 32"><defs><clipPath id="ca6"><circle cx="16" cy="16" r="16"/></clipPath></defs><g clip-path="url(#ca6)"><rect width="32" height="32" fill="#cfd1d4"/><rect x="0" y="12" width="32" height="5" fill="#e6e7e9"/><ellipse cx="19" cy="18" rx="8" ry="10" fill="#5d6268"/><path d="M11 12 C11 5 15 2.5 20 2.5 C26 3 28 8 26.5 14 C25 10 22 9 19 9.5 C15 10 13 12 11 12Z" fill="#24272b"/><ellipse cx="18" cy="35" rx="15" ry="9" fill="#3a3e44"/><circle cx="9" cy="27" r="2" fill="#4d7fe0" opacity=".7"/></g></svg>
<svg class="a" style="left:2381px;top:1531.0px" width="32" height="32" viewBox="0 0 32 32"><defs><clipPath id="cb6"><circle cx="16" cy="16" r="16"/></clipPath></defs><g clip-path="url(#cb6)"><rect width="32" height="32" fill="#9a9ea3"/><rect width="32" height="10" fill="#c9cbce"/><path d="M2 14 V7 L4 6 V4 L7 4 V9 L10 9 V1 L12 1 V8 L16 8 V3 L19 3 V10 L23 10 V5 L27 5 V9 L31 11 V14Z" fill="#4a4d52"/><rect x="0" y="15" width="32" height="1.5" fill="#2a2c30"/><path d="M2 20 L6 15 L8 19 L4 22Z" fill="#e0453a"/><circle cx="17" cy="19" r="3.2" fill="#e0653d"/><rect x="14.5" y="22" width="5" height="5" fill="#d85a3a"/><ellipse cx="17" cy="33" rx="13" ry="8" fill="#131518"/></g></svg>
<div class="av" style="left:2415px;top:1531.0px;width:32px;height:32px;background:#1e2836;color:#fff;font-size:16.5px;text-align:center;line-height:32px">MB</div>
<div class="av" style="left:2449px;top:1531.0px;width:32px;height:32px;background:#1e2836;color:#fff;font-size:16.5px;text-align:center;line-height:32px">+4</div>
<div class="t" style="left:2589px;top:1534.7px;font-size:23.5px;color:#1f2937">adfg adsfg</div>
<div class="t" style="left:2943px;top:1533.9px;font-size:23.7px;color:#1f2937">adfgadfg@acceleratorapp...</div>
<div class="a" style="left:3295px;top:1528.5px;width:194px;height:38px;border-radius:6px;background:#f2f3f5;overflow:hidden"><svg class="a" style="left:11px;top:7px" width="25" height="25" viewBox="0 0 25 25"><rect x="-1" y="6" width="26" height="13" rx="4.5" fill="#e83a30" transform="rotate(40 12.5 12.5)"/><circle cx="5.8" cy="5.5" r="1.5" fill="#fff" opacity=".75"/></svg><div class="t" style="left:47px;top:6px;font-size:23.5px;color:#374151">Custom Fields</div></div>
<div class="a" style="left:411px;top:716px;width:3089px;height:66px;background:#f3f4f6"></div>
<div class="cb" style="left:444px;top:734px"></div>
<svg class="a" style="left:446px;top:740px" width="28" height="20" viewBox="0 0 28 20"><path d="M3.5 9.5 L10 16.5 L25 2.5" fill="none" stroke="#2d3440" stroke-width="4.6" stroke-linecap="round" stroke-linejoin="round"/></svg>
<div class="sep" style="left:513px"></div>
<div class="sep" style="left:873px"></div>
<div class="sep" style="left:1114px"></div>
<div class="sep" style="left:1355px"></div>
<div class="sep" style="left:1596px"></div>
<div class="sep" style="left:1837px"></div>
<div class="sep" style="left:2078px"></div>
<div class="sep" style="left:2320px"></div>
<div class="sep" style="left:2561px"></div>
<div class="sep" style="left:2915px"></div>
<div class="sep" style="left:3268px"></div>
<div class="t hdr" style="left:547px;top:740px">APPLICATION NAME</div>
<div class="t hdr" style="left:900.5px;top:740px">CREATION DATE</div>
<div class="t hdr" style="left:1142px;top:740px">FUNNEL</div>
<div class="t hdr" style="left:1383px;top:740px">OVERALL STATUS</div>
<div class="t hdr" style="left:1624.5px;top:740px">REJECTION TYPE</div>
<div class="t hdr" style="left:1865px;top:740px">CURRENT ROUND</div>
<div class="t hdr" style="left:2106.7px;top:740px">REVIEW PROCESS</div>
<div class="t hdr" style="left:2347px;top:740px">STAFF</div>
<div class="t hdr" style="left:2589px;top:740px">FULL NAME</div>
<div class="t hdr" style="left:2942.5px;top:740px">EMAIL</div>
<div class="t hdr" style="left:3296.6px;top:740px">TAGS</div>
<div class="a" style="left:514px;top:446px;width:7px;height:1110px;background:#e6e8eb"></div>
<div class="a" style="left:429px;top:699px;width:59px;height:502px;border:4px solid #e8372f"></div>
<svg class="a" style="left:3000px;top:400px" width="160" height="140" viewBox="3000 400 160 140"><path d="M3030 525 C3070 508 3110 480 3132 424" fill="none" stroke="#e8372f" stroke-width="8" stroke-linecap="round"/><path d="M3112 432 L3133 422 L3140 443" fill="none" stroke="#e8372f" stroke-width="8" stroke-linecap="round" stroke-linejoin="round"/></svg>
<!-- /TABLE -->

</body></html>
